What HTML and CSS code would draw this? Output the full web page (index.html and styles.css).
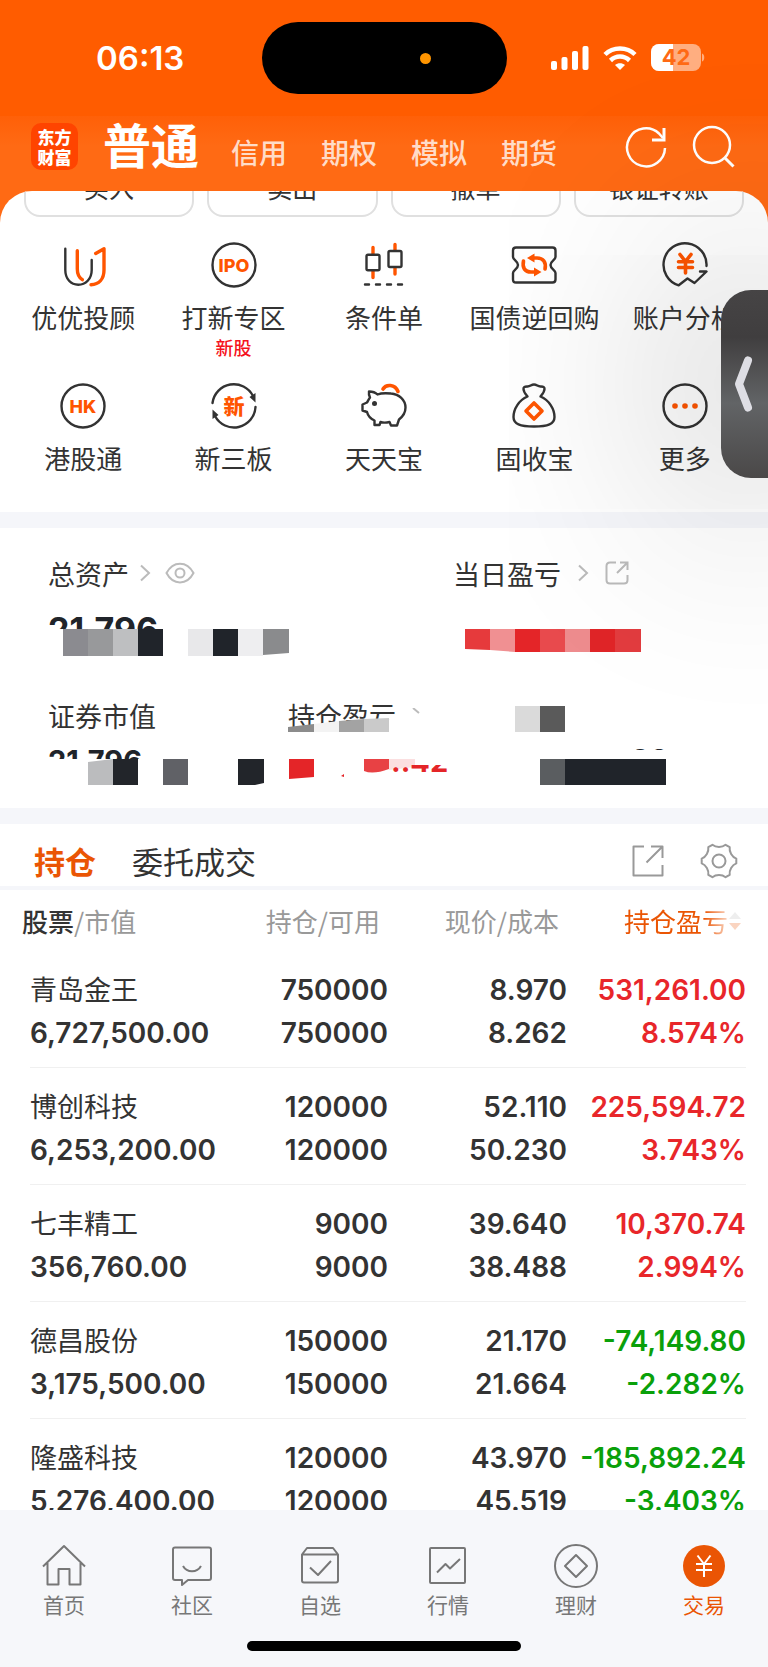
FILE: index.html
```html
<!DOCTYPE html>
<html lang="zh">
<head>
    <meta charset="UTF-8">
    <meta name="viewport" content="width=device-width, initial-scale=1">
    <title>东方财富 - 交易</title>
    <link rel="stylesheet" href="styles.css">
</head>
<body>
<div class="app">
    <header class="header">
        <div class="status-bar">
            <span class="time">06:13</span>
            <div class="island"><span class="dot"></span></div>
            <div class="status-icons">
                <svg width="38" height="26" viewBox="0 0 38 26" fill="#fff">
                    <rect x="0" y="16" width="6" height="9" rx="2"/>
                    <rect x="10.500" y="12" width="6" height="13" rx="2"/>
                    <rect x="21" y="6" width="6" height="19" rx="2"/>
                    <rect x="31.500" y="1" width="6" height="24" rx="2"/>
                </svg>
                <svg width="34" height="26" viewBox="0 0 34 26" fill="none" stroke="#fff" stroke-width="4.500">
                    <path d="M2 9.500C10 1.500 24 1.500 32 9.500"/>
                    <path d="M7.500 15.500C13 10.300 21 10.300 26.500 15.500"/>
                    <path d="M17 25l-5-5c2.800-2.400 7.200-2.400 10 0z" fill="#fff" stroke="none"/>
                </svg>
                <svg width="54" height="28" viewBox="0 0 54 28">
                    <rect x="0" y="0" width="50" height="27" rx="8" fill="#ffae80"/>
                    <path d="M8 0h14v27H8a8 8 0 0 1-8-8V8a8 8 0 0 1 8-8z" fill="#fff"/>
                    <path d="M51 9.500c3 .5 3 7.500 0 8z" fill="#ffae80"/>
                    <text x="25" y="21" class="battery-text">42</text>
                </svg>
            </div>
        </div>
        <nav class="nav">
            <div class="logo"><span>东方</span><span>财富</span></div>
            <div class="account-tabs">
                <button class="account-tab active">普通</button>
                <button class="account-tab">信用</button>
                <button class="account-tab">期权</button>
                <button class="account-tab">模拟</button>
                <button class="account-tab">期货</button>
            </div>
            <div class="nav-actions">
                <button aria-label="刷新">
                    <svg width="44" height="44" viewBox="0 0 44 44" fill="none" stroke="#fff" stroke-width="2.500">
                        <path d="M41 23A19 19 0 1 1 35 8.500L39 13"/>
                        <path d="M40 3v12H28" stroke-width="3"/>
                    </svg>
                </button>
                <button aria-label="搜索">
                    <svg width="44" height="44" viewBox="0 0 44 44" fill="none" stroke="#fff" stroke-width="2.500">
                        <circle cx="20" cy="20" r="18"/>
                        <path d="M32.500 32.500l9 9" stroke-width="3"/>
                    </svg>
                </button>
            </div>
        </nav>
    </header>

    <main class="sheet">
        <div class="trade-buttons">
            <button>买入</button>
            <button>卖出</button>
            <button>撤单</button>
            <button>银证转账</button>
        </div>

        <section class="menu">
            <a href="#" class="menu-item">
                <svg class="icon" viewBox="0 0 46 46">
                    <path d="M5.300 6.700V28C5.300 37 11 42.700 18.300 42.700S31.700 37 31.700 28V18"/>
                    <path class="orange" d="M17.300 8.700V27C17.300 32 19 35.500 22.300 37.700M35.700 11.500L44 6.700V28C44 37 39 42.300 31 42.700"/>
                </svg>
                <span class="label">优优投顾</span>
            </a>
            <a href="#" class="menu-item">
                <svg class="icon" viewBox="0 0 46 46">
                    <circle cx="23" cy="23" r="21.500"/>
                    <text x="23" y="29.500" class="icon-text">IPO</text>
                </svg>
                <span class="label">打新专区</span>
                <span class="sub">新股</span>
            </a>
            <a href="#" class="menu-item">
                <svg class="icon" viewBox="0 0 46 46">
                    <path class="orange" d="M12 5.500V12M12 29v6.500M34 2.500V8M34 26v6"/>
                    <rect x="5.500" y="12.700" width="13" height="15.600" rx="1.500"/>
                    <rect x="27.500" y="9" width="13" height="16" rx="1.500"/>
                    <path d="M4 42.500h4M15 42.500h4M26 42.500h4M37 42.500h4"/>
                </svg>
                <span class="label">条件单</span>
            </a>
            <a href="#" class="menu-item">
                <svg class="icon" viewBox="0 0 46 46">
                    <path d="M5 5.500H41.500Q44.500 5.500 44.500 8.500V15C44.500 18 39.500 19 39.500 23S44.500 28 44.500 31V37.500Q44.500 40.500 41.500 40.500H5Q2 40.500 2 37.500V31C2 28 7 27 7 23S2 18 2 15V8.500Q2 5.500 5 5.500Z"/>
                    <path class="orange thick" d="M22 16H26C32 16 35.500 20 34 27M25 30H20C14 30 11 26 12.500 19"/>
                    <path class="orange-fill" d="M16 16L23.500 11.500V20.500ZM30.500 30L23 25.500V34.500Z"/>
                </svg>
                <span class="label">国债逆回购</span>
            </a>
            <a href="#" class="menu-item">
                <svg class="icon" viewBox="0 0 46 46">
                    <path d="M44.500 24A21.500 21.500 0 1 0 16.700 43.300L25.500 36.500L32.500 41L44.500 29.500H38"/>
                    <path class="orange thick" d="M18 12.500L23.500 19.500L29 12.500M23.500 20V31M16.500 19.800H30.500M16.500 25.500H30.500"/>
                </svg>
                <span class="label">账户分析</span>
            </a>
            <a href="#" class="menu-item">
                <svg class="icon" viewBox="0 0 46 46">
                    <circle cx="23" cy="23" r="21.500"/>
                    <text x="23" y="30" class="icon-text">HK</text>
                </svg>
                <span class="label">港股通</span>
            </a>
            <a href="#" class="menu-item">
                <svg class="icon" viewBox="0 0 46 46">
                    <path d="M1.500 20A21.500 21.500 0 0 1 42 13M44.500 24A21.500 21.500 0 0 1 4 33"/>
                    <path class="dark-fill" d="M38.500 14L44.500 10L44.500 19.500ZM7.500 32L1.500 36L1.500 26.500Z"/>
                    <text x="23" y="30.500" class="icon-text cjk">新</text>
                </svg>
                <span class="label">新三板</span>
            </a>
            <a href="#" class="menu-item">
                <svg class="icon" viewBox="0 0 46 46">
                    <path class="orange thick" d="M22 6C25 1 34 1 37 8.500"/>
                    <path d="M16.500 11.500C14 9 11 8.500 8 8.500C7.500 11.500 8.500 13.500 9 14.500C7.500 16.500 7 18 6 19.500L1.500 21.500V27.500L6 29C7 33 10 36 13.500 37.500V42H18.500L19.500 39C22 39.800 26 39.600 28.500 39L30 42.500H36L38 36.500C42.500 33 44.500 28.500 44.500 24.500C44.500 17 38 11 30 10.500C25 10 20 10 16.500 11.500Z"/>
                    <circle class="dark-fill" cx="13.500" cy="20.500" r="2.500"/>
                </svg>
                <span class="label">天天宝</span>
            </a>
            <a href="#" class="menu-item">
                <svg class="icon" viewBox="0 0 46 46">
                    <path d="M16.500 13.500C14.500 11 12.500 9 12.500 6C12.500 3.500 14 3.500 16 3.500C19 4 20 1.500 23 1.500S27 4 30 3.500C32 3.500 33.500 3.500 33.500 6C33.500 9 31.500 11 29.500 13.500C38 17 43.500 26 43.500 34C43.500 41 37 43.500 23 43.500S2.500 41 2.500 34C2.500 26 8 17 16.500 13.500Z"/>
                    <path class="orange thick" d="M23 20L31 28L23 36L15 28Z"/>
                </svg>
                <span class="label">固收宝</span>
            </a>
            <a href="#" class="menu-item">
                <svg class="icon" viewBox="0 0 46 46">
                    <circle cx="23" cy="23" r="21.500"/>
                    <g class="orange-fill"><circle cx="13" cy="23" r="2.800"/><circle cx="23" cy="23" r="2.800"/><circle cx="33" cy="23" r="2.800"/></g>
                </svg>
                <span class="label">更多</span>
            </a>
        </section>

        <section class="assets">
            <div class="asset-row top">
                <div class="asset">
                    <div class="asset-label">总资产
                        <svg class="chevron" viewBox="0 0 12 18"><path d="M2 1.500L10 9L2 16.500"/></svg>
                        <svg class="eye" viewBox="0 0 30 22"><path d="M1.500 11C8 -1.500 22 -1.500 28.500 11C22 23.500 8 23.500 1.500 11Z"/><circle cx="15" cy="11" r="4.500"/></svg>
                    </div>
                    <div class="asset-value big">21,796</div>
                    <svg class="mosaic" width="242" height="27" viewBox="0 0 242 27">
                        <rect x="15" width="25" height="27" fill="#8b8b90"/>
                        <rect x="40" width="25" height="27" fill="#98999b"/>
                        <rect x="65" width="25" height="27" fill="#bebfc1"/>
                        <rect x="90" width="25" height="27" fill="#20242a"/>
                        <rect x="140" width="25" height="27" fill="#e8e8ea"/>
                        <rect x="165" width="25" height="27" fill="#20242a"/>
                        <rect x="190" width="25" height="27" fill="#eeeef0"/>
                        <path d="M215 0h26v24l-26 2z" fill="#8a8b8d"/>
                    </svg>
                </div>
                <div class="asset">
                    <div class="asset-label">当日盈亏
                        <svg class="chevron wide" viewBox="0 0 12 18"><path d="M2 1.500L10 9L2 16.500"/></svg>
                        <svg class="share" viewBox="0 0 24 24"><path d="M11 1.500H5Q1.500 1.500 1.500 5V19Q1.500 22.500 5 22.500H19Q22.500 22.500 22.500 19V14M15 1.500H22.500V9M22 2L12 12"/></svg>
                    </div>
                    <div class="asset-value big"></div>
                    <svg class="mosaic" width="190" height="27" viewBox="0 0 190 27">
                        <path d="M12 0h25v21l-25-1z" fill="#e63a3c"/>
                        <path d="M37 0h25v23l-25-2z" fill="#f09092"/>
                        <rect x="62" width="25" height="23" fill="#e42528"/>
                        <rect x="87" width="25" height="23" fill="#e84a4d"/>
                        <rect x="112" width="25" height="23" fill="#ee8c8e"/>
                        <rect x="137" width="25" height="23" fill="#e02528"/>
                        <rect x="162" width="26" height="23" fill="#e23c3f"/>
                    </svg>
                </div>
            </div>
            <div class="asset-row bottom">
                <div class="asset">
                    <div class="asset-label">证券市值</div>
                    <div class="asset-value small">21,796</div>
                    <svg class="mosaic" width="218" height="26" viewBox="0 0 218 26">
                        <path d="M40 3l25-3v26h-25z" fill="#bbbcbe"/>
                        <rect x="65" width="25" height="26" fill="#22252a"/>
                        <rect x="115" width="25" height="26" fill="#606166"/>
                        <path d="M190 0h26v24l-9 2h-17z" fill="#22252a"/>
                    </svg>
                </div>
                <div class="asset">
                    <div class="asset-label covered">持仓盈亏
                        <svg class="tick" viewBox="0 0 8 6"><path d="M1 0l6 5"/></svg>
                        <svg class="cover" width="112" height="20" viewBox="0 0 112 20">
                            <path d="M0 11L112 0V20H0Z" fill="#fff"/>
                            <path d="M0 9l26-3v8H0z" fill="#8c8c8c"/>
                            <path d="M26 6l25-3v11H26z" fill="#f3f3f3"/>
                            <path d="M51 3l25-2v13H51z" fill="#a3a3a3"/>
                            <path d="M76 1l25-1v14H76z" fill="#cacaca"/>
                        </svg>
                    </div>
                    <div class="asset-value small"></div>
                    <div class="mosaic-line">
                        <svg class="mosaic" width="128" height="26" viewBox="0 0 128 26">
                            <path d="M1 0h25v18l-25 2z" fill="#e42528"/>
                            <path d="M53 17l3-2v3z" fill="#e42528"/>
                            <path d="M76 0h25v10q-16 6-25 2z" fill="#e84144"/>
                            <path d="M101 0h26v8l-26 3z" fill="#fbdfe0"/>
                        </svg>
                        <span class="remnant">..42</span>
                    </div>
                </div>
                <div class="asset">
                    <svg class="mosaic-label" width="54" height="38" viewBox="0 0 54 38">
                        <rect x="2" y="10" width="25" height="26" fill="#dadada"/>
                        <rect x="27" y="10" width="25" height="26" fill="#5a5a5a"/>
                    </svg>
                    <div class="asset-value tiny">98</div>
                    <svg class="mosaic" width="154" height="26" viewBox="0 0 154 26">
                        <rect x="27" width="25" height="26" fill="#5a5d60"/>
                        <rect x="52" width="101" height="26" fill="#20242a"/>
                    </svg>
                </div>
            </div>
        </section>

        <section class="holdings">
            <div class="tabs">
                <button class="tab active">持仓</button>
                <button class="tab">委托成交</button>
                <div class="tab-actions">
                    <button aria-label="分享">
                        <svg width="32" height="32" viewBox="0 0 32 32"><path d="M12 1.500H1.500V30.500H30.500V20M19 1.500H30.500V13M30 2L14.500 17.500"/></svg>
                    </button>
                    <button aria-label="设置">
                        <svg width="38" height="38" viewBox="-19 -19 38 38">
                            <path d="M17.300 -2.400L17.300 2.400C13 4 10 9.300 10.700 13.800L6.600 16.200C3 13.300 -3 13.300 -6.600 16.200L-10.700 13.800C-10 9.300 -13 4 -17.300 2.400L-17.300 -2.400C-13 -4 -10 -9.300 -10.700 -13.800L-6.600 -16.200C-3 -13.300 3 -13.300 6.600 -16.200L10.700 -13.800C10 -9.300 13 -4 17.300 -2.400Z"/>
                            <circle r="6.500"/>
                        </svg>
                    </button>
                </div>
            </div>
            <table>
                <thead>
                <tr>
                    <th class="first"><b>股票</b>/市值</th>
                    <th>持仓/可用</th>
                    <th>现价/成本</th>
                    <th class="sorted"><span class="fade">持仓盈亏<svg width="14" height="22" viewBox="0 0 14 22"><path d="M7 2l6 7H1z" fill="#bbb"/><path d="M7 20l6-7H1z" fill="#ea5504"/></svg></span></th>
                </tr>
                </thead>
                <tbody>
                <tr>
                    <td><span class="name">青岛金王</span>6,727,500.00</td>
                    <td>750000<br>750000</td>
                    <td>8.970<br>8.262</td>
                    <td class="up">531,261.00<br>8.574%</td>
                </tr>
                <tr>
                    <td><span class="name">博创科技</span>6,253,200.00</td>
                    <td>120000<br>120000</td>
                    <td>52.110<br>50.230</td>
                    <td class="up">225,594.72<br>3.743%</td>
                </tr>
                <tr>
                    <td><span class="name">七丰精工</span>356,760.00</td>
                    <td>9000<br>9000</td>
                    <td>39.640<br>38.488</td>
                    <td class="up">10,370.74<br>2.994%</td>
                </tr>
                <tr>
                    <td><span class="name">德昌股份</span>3,175,500.00</td>
                    <td>150000<br>150000</td>
                    <td>21.170<br>21.664</td>
                    <td class="down">-74,149.80<br>-2.282%</td>
                </tr>
                <tr>
                    <td><span class="name">隆盛科技</span>5,276,400.00</td>
                    <td>120000<br>120000</td>
                    <td>43.970<br>45.519</td>
                    <td class="down">-185,892.24<br>-3.403%</td>
                </tr>
                </tbody>
            </table>
        </section>
    </main>

    <footer class="footer">
        <nav class="tab-bar">
            <a href="#">
                <svg viewBox="0 0 44 44"><path d="M1 22.500L22 2L43 22.500M5.500 19V40.500H16.500V25H27.500V40.500H38.500V19"/></svg>
                首页
            </a>
            <a href="#">
                <svg viewBox="0 0 44 44"><path d="M5 3.500H39Q41 3.500 41 5.500V34Q41 36 39 36H18L12 41V36H5Q3 36 3 34V5.500Q3 3.500 5 3.500ZM13 22C17 29 27 29 31 22"/></svg>
                社区
            </a>
            <a href="#">
                <svg viewBox="0 0 44 44"><path d="M4 10.500L9 4H35L40 10.500V36.500Q40 38.500 38 38.500H6Q4 38.500 4 36.500ZM4 10.500H40M12 23.500L20 31L33 17"/></svg>
                自选
            </a>
            <a href="#">
                <svg viewBox="0 0 44 44"><rect x="4" y="4" width="35" height="35" rx="1"/><path d="M11 28.500L19.500 20L24 24.500L34 15"/></svg>
                行情
            </a>
            <a href="#">
                <svg viewBox="0 0 44 44"><circle cx="22" cy="22" r="21"/><path d="M22 11L33 22L22 33L11 22Z"/></svg>
                理财
            </a>
            <a href="#" class="active">
                <svg viewBox="0 0 44 44"><circle cx="22" cy="22" r="21"/><path d="M15.500 11.500L22 20L28.500 11.500M22 20V33M14 20H30M14 26H30"/></svg>
                交易
            </a>
        </nav>
        <div class="home-indicator"></div>
    </footer>

    <button class="side-handle" aria-label="展开">
        <svg width="20" height="60" viewBox="0 0 20 60"><path d="M14 6.500L5 30L14 53.500"/></svg>
    </button>
</div>
</body>
</html>
```

FILE: styles.css
```css
* {
    box-sizing: border-box;
}
body {
    margin: 0;
    font-family: "Noto Sans CJK SC", sans-serif;
    color: #333;
}
button {
    padding: 0;
    border: none;
    background: none;
    font: inherit;
    color: inherit;
    cursor: pointer;
}
a {
    color: inherit;
    text-decoration: none;
}
svg {
    display: block;
    flex: none;
}
.app {
    position: relative;
    display: flex;
    flex-direction: column;
    height: 100vh;
    overflow: hidden;
    background: #ff6a14;
}

/* 顶部 */
.status-bar {
    display: grid;
    grid-template-columns: 1fr 245px 1fr;
    align-items: center;
    height: 116px;
    background: #ff5c00;
}
.time {
    padding-left: 96px;
    font: 600 33px/40px Inter, sans-serif;
    color: #fff;
}
.island {
    display: flex;
    align-items: center;
    justify-content: flex-end;
    height: 72px;
    padding-right: 76px;
    border-radius: 36px;
    background: #000;
}
.dot {
    width: 11px;
    height: 11px;
    border-radius: 50%;
    background: #ff9500;
}
.status-icons {
    display: flex;
    align-items: center;
    gap: 14px;
    padding-left: 44px;
}
.battery-text {
    font: 700 22px Inter, sans-serif;
    fill: #ff6a14;
    text-anchor: middle;
}
.nav {
    display: flex;
    align-items: center;
    height: 75px;
    padding: 0 32px 14px 31px;
    background: linear-gradient(#ff6008, #ff6a14 40%);
}
.logo {
    display: flex;
    flex-direction: column;
    align-items: center;
    justify-content: center;
    width: 47px;
    height: 47px;
    margin-right: 25px;
    border-radius: 10px;
    background: #ff4400;
    color: #fff;
    font-size: 17px;
    font-weight: 900;
    line-height: 20px;
}
.account-tabs {
    display: flex;
    align-items: baseline;
    gap: 32px;
    flex: 1;
    padding-bottom: 8px;
}
.account-tab {
    font-size: 28px;
    line-height: 32px;
    font-weight: 500;
    color: #ffdcc8;
}
.account-tab + .account-tab {
    margin-right: 2px;
}
.account-tab.active {
    font-size: 48px;
    line-height: 56px;
    font-weight: 700;
    color: #fff;
}
.nav-actions {
    display: flex;
    gap: 24px;
}

/* 内容 */
.sheet {
    display: flex;
    flex-direction: column;
    flex: 1;
    min-height: 0;
    overflow: hidden;
    border-radius: 32px 32px 0 0;
    background: #fff;
}
.sheet > * {
    flex: none;
}
.trade-buttons {
    display: grid;
    grid-template-columns: repeat(4, 1fr);
    gap: 13px;
    margin-top: -34px;
    padding: 0 24px;
}
.trade-buttons button {
    height: 60px;
    border: 2px solid #e0e0e0;
    border-radius: 16px;
    font-size: 25px;
    line-height: 36px;
}
.menu {
    display: grid;
    grid-template-columns: repeat(5, 1fr);
    row-gap: 25px;
    padding: 25px 8px 35px;
    border-bottom: 16px solid #f5f6fa;
}
.menu-item {
    display: flex;
    flex-direction: column;
    align-items: center;
    white-space: nowrap;
}
.icon {
    width: 46px;
    height: 46px;
    margin-bottom: 10px;
    fill: none;
    stroke: #333;
    stroke-width: 2.4;
    stroke-linecap: round;
    stroke-linejoin: round;
}
.icon .orange {
    stroke: #ff5500;
    stroke-width: 3.4;
}
.icon .thick {
    stroke-width: 3.6;
}
.icon .orange-fill {
    fill: #ff5500;
    stroke: none;
}
.icon .dark-fill {
    fill: #333;
    stroke: none;
}
.icon-text {
    font: 800 18px Inter, sans-serif;
    fill: #ff5500;
    stroke: none;
    text-anchor: middle;
}
.icon-text.cjk {
    font: 900 21px "Noto Sans CJK SC", sans-serif;
}
.label {
    font-size: 26px;
    line-height: 38px;
}
.sub {
    font-size: 18px;
    font-weight: 500;
    line-height: 22px;
    color: #f5121d;
}

/* 资产 */
.assets {
    padding: 26px 0 23px 48px;
    border-bottom: 16px solid #f5f6fa;
}
.asset-row {
    display: grid;
}
.asset-row.top {
    grid-template-columns: 9fr 7fr;
    margin-bottom: 40px;
}
.asset-row.bottom {
    grid-template-columns: 16fr 15fr 17fr;
}
.asset-label {
    display: flex;
    align-items: center;
    height: 38px;
    font-size: 27px;
}
.asset-label svg {
    fill: none;
    stroke: #bbb;
    stroke-width: 2;
}
.chevron {
    width: 12px;
    height: 18px;
    margin: 0 14px 0 10px;
}
.chevron.wide {
    margin: 0 16px;
}
.eye {
    width: 30px;
    height: 22px;
}
.share {
    width: 24px;
    height: 24px;
}
.asset-value {
    overflow: hidden;
    font-family: Inter, sans-serif;
    font-weight: 700;
    color: #20242a;
}
.asset-value.big {
    height: 37px;
    padding-top: 17px;
    font-size: 34px;
    line-height: 42px;
}
.asset-value.small {
    height: 25px;
    padding-top: 9px;
    font-size: 29px;
    line-height: 36px;
}
.asset-value.tiny {
    height: 16px;
    margin-bottom: 9px;
    padding: 8px 0 0 118px;
    font-size: 29px;
    line-height: 36px;
}
.asset-label.covered {
    position: relative;
}
.asset-label .cover {
    position: absolute;
    left: 0;
    bottom: -4px;
    stroke: none;
}
.tick {
    width: 8px;
    height: 6px;
    margin: 0 0 8px 16px;
}
.mosaic-line {
    display: flex;
}
/* 只露出数字的下半部分 */
.remnant {
    display: flex;
    align-items: flex-end;
    height: 8px;
    margin: 6px 0 0 -25px;
    overflow: hidden;
    font: 700 29px/22px Inter, sans-serif;
    color: #e42528;
}

/* 持仓 */
.tabs {
    display: flex;
    align-items: center;
    gap: 36px;
    height: 66px;
    padding: 11px 30px 0 34px;
    border-bottom: 4px solid #f5f6fa;
}
.tab {
    font-size: 31px;
    line-height: 40px;
}
.tab.active {
    font-weight: 700;
    color: #ea5504;
}
.tab-actions {
    display: flex;
    align-items: center;
    gap: 36px;
    margin-left: auto;
}
.tab-actions svg {
    fill: none;
    stroke: #999;
    stroke-width: 2;
    stroke-linejoin: round;
}
.holdings {
    padding-bottom: 20px;
}
table {
    width: calc(100% - 52px);
    margin: 0 22px 0 30px;
    table-layout: fixed;
    border-collapse: collapse;
}
th, td {
    padding: 0;
    text-align: right;
    white-space: nowrap;
}
th {
    width: 25%;
    height: 61px;
    padding: 1px 8px 0 0;
    font-size: 26px;
    font-weight: 400;
    line-height: 38px;
    color: #999;
}
th:nth-child(2) {
    width: 20%;
}
th.first {
    width: 30%;
    text-align: left;
    text-indent: -8px;
}
th b {
    font-weight: 500;
    color: #333;
}
th.sorted {
    padding-right: 4px;
    color: #ea5504;
}
.fade {
    display: inline-flex;
    align-items: center;
    mask-image: linear-gradient(to right, #000 68%, rgba(0, 0, 0, 0.25) 88%);
}
td {
    padding: 18px 0 12px;
    border-bottom: 1px solid #f0f0f0;
    font: 600 28px/43px Inter, sans-serif;
}
td:first-child {
    text-align: left;
}
.name {
    display: block;
    height: 43px;
    font: 400 27px/40px "Noto Sans CJK SC", sans-serif;
}
.up {
    color: #e8262a;
}
.down {
    color: #0aa00a;
}

/* 底部 */
.footer {
    padding: 34px 0 16px;
    background: #f6f7fa;
}
.tab-bar {
    display: grid;
    grid-template-columns: repeat(6, 1fr);
}
.tab-bar a {
    display: flex;
    flex-direction: column;
    align-items: center;
    gap: 2px;
    font-size: 21px;
    line-height: 28px;
    color: #777;
}
.tab-bar svg {
    width: 44px;
    height: 44px;
    fill: none;
    stroke: #777;
    stroke-width: 2;
    stroke-linejoin: round;
}
.tab-bar .active {
    color: #ea5504;
}
.tab-bar .active circle {
    fill: #ea5504;
    stroke: none;
}
.tab-bar .active path {
    stroke: #fff;
}
.home-indicator {
    width: 274px;
    height: 10px;
    margin: 23px auto 0;
    border-radius: 5px;
    background: #000;
}

/* 侧边悬浮 */
.side-handle {
    position: absolute;
    top: 290px;
    right: 0;
    display: flex;
    align-items: center;
    width: 47px;
    height: 188px;
    padding-left: 13px;
    border-radius: 30px 0 0 30px;
    background: linear-gradient(#464445, #403e3f 25%, #626466 60%, #4a4848);
    box-shadow: 0 0 220px 40px rgba(0, 0, 0, 0.24);
}
.side-handle path {
    fill: none;
    stroke: #dedee4;
    stroke-width: 8;
    stroke-linecap: round;
    stroke-linejoin: round;
}
```
